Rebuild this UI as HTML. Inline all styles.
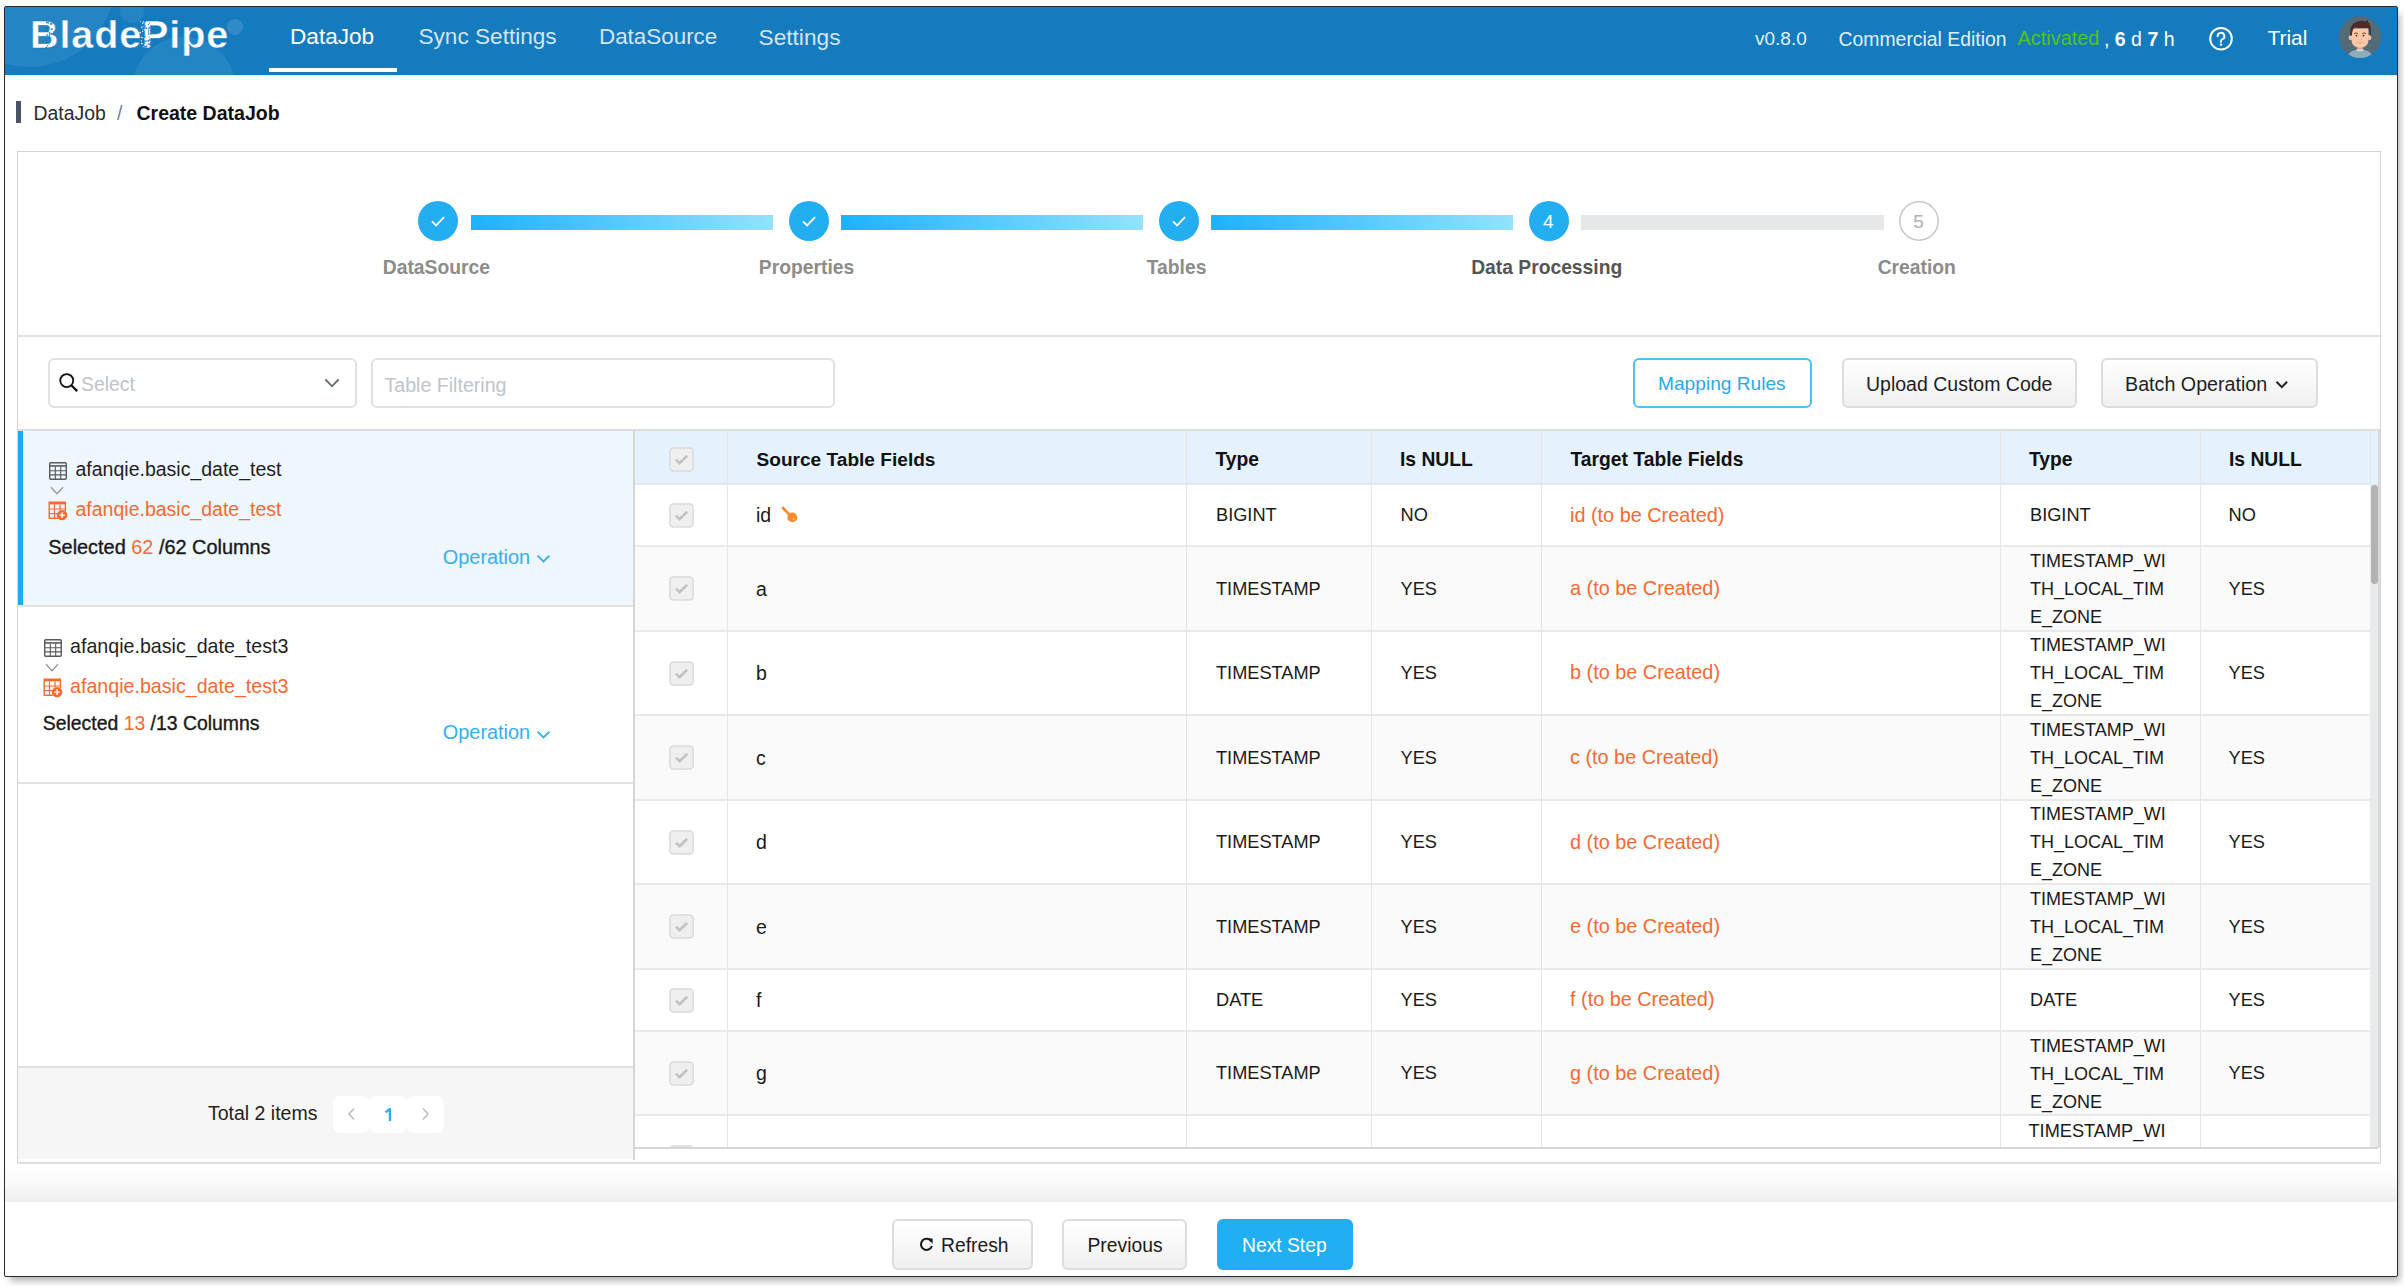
<!DOCTYPE html>
<html><head><meta charset="utf-8"><title>BladePipe</title>
<style>
html,body{margin:0;padding:0;background:#fff;}
body{width:2404px;height:1286px;position:relative;overflow:hidden;font-family:"Liberation Sans", sans-serif;}
.t{position:absolute;white-space:nowrap;}
.r{position:absolute;}
.win{position:absolute;left:4px;top:6px;width:2392px;height:1269px;border:1px solid #2a2a2a;border-radius:2px;background:#fff;box-shadow:4px 6px 7px -2px rgba(0,0,0,0.3);}
</style></head><body>
<div class="win"></div><div class="r" style="left:5px;top:7px;width:2392px;height:68px;background:#157bbf;box-shadow:0 1px 2px rgba(0,40,80,0.12)"></div><div class="r" style="left:5px;top:7px;width:300px;height:68px;overflow:hidden"><div class="r" style="left:-60px;top:-110px;width:170px;height:170px;border-radius:50%;background:rgba(255,255,255,0.07)"></div><div class="r" style="left:115px;top:-8px;width:24px;height:24px;border-radius:50%;background:rgba(255,255,255,0.07)"></div><div class="r" style="left:127px;top:30px;width:104px;height:104px;border-radius:50%;background:rgba(255,255,255,0.07)"></div><div class="r" style="left:222px;top:12px;width:16px;height:16px;border-radius:50%;background:rgba(255,255,255,0.12)"></div></div><div class="t" style="left:30.0px;top:10.11px;font-size:39.5px;line-height:49px;color:#fff;font-weight:700;letter-spacing:0.9px;-webkit-text-stroke:0.45px #157bbf">BladePipe</div><svg class="r" style="left:5px;top:7px" width="240" height="60" viewBox="0 0 240 60"><circle cx="44.4" cy="29.1" r="0.87" fill="#157bbf"/><circle cx="44.5" cy="27.7" r="0.71" fill="#157bbf"/><circle cx="42.4" cy="27.8" r="0.73" fill="#157bbf"/><circle cx="46.9" cy="16.5" r="0.59" fill="#157bbf"/><circle cx="41.7" cy="35.9" r="0.76" fill="#157bbf"/><circle cx="41.3" cy="40.5" r="0.88" fill="#157bbf"/><circle cx="45.9" cy="30.6" r="0.52" fill="#157bbf"/><circle cx="41.1" cy="28.3" r="0.48" fill="#157bbf"/><circle cx="42.4" cy="20.5" r="0.46" fill="#157bbf"/><circle cx="44.5" cy="25.9" r="0.83" fill="#157bbf"/><circle cx="44.9" cy="31.3" r="0.67" fill="#157bbf"/><circle cx="46.0" cy="26.3" r="0.58" fill="#157bbf"/><circle cx="48.5" cy="40.9" r="0.83" fill="#157bbf"/><circle cx="46.3" cy="22.5" r="0.55" fill="#157bbf"/><circle cx="43.2" cy="15.9" r="0.79" fill="#157bbf"/><circle cx="44.0" cy="36.9" r="0.62" fill="#157bbf"/><circle cx="48.2" cy="36.9" r="0.45" fill="#157bbf"/><circle cx="42.6" cy="38.6" r="0.66" fill="#157bbf"/><circle cx="48.4" cy="24.7" r="0.48" fill="#157bbf"/><circle cx="45.7" cy="35.0" r="0.57" fill="#157bbf"/><circle cx="41.7" cy="23.0" r="0.88" fill="#157bbf"/><circle cx="46.7" cy="17.2" r="0.56" fill="#157bbf"/><circle cx="41.8" cy="15.6" r="0.81" fill="#157bbf"/><circle cx="42.3" cy="29.1" r="0.65" fill="#157bbf"/><circle cx="42.4" cy="33.8" r="0.51" fill="#157bbf"/><circle cx="45.8" cy="17.1" r="0.64" fill="#157bbf"/><circle cx="42.6" cy="21.3" r="0.89" fill="#157bbf"/><circle cx="47.0" cy="22.2" r="0.85" fill="#157bbf"/><circle cx="42.6" cy="24.6" r="0.83" fill="#157bbf"/><circle cx="45.8" cy="16.7" r="0.90" fill="#157bbf"/><circle cx="141.3" cy="21.0" r="0.80" fill="#157bbf"/><circle cx="142.0" cy="22.0" r="0.48" fill="#157bbf"/><circle cx="140.5" cy="29.7" r="0.56" fill="#157bbf"/><circle cx="143.6" cy="24.0" r="0.65" fill="#157bbf"/><circle cx="145.8" cy="27.1" r="0.71" fill="#157bbf"/><circle cx="145.2" cy="18.9" r="0.52" fill="#157bbf"/><circle cx="145.5" cy="36.1" r="0.56" fill="#157bbf"/><circle cx="141.1" cy="34.0" r="0.87" fill="#157bbf"/><circle cx="141.2" cy="39.7" r="0.85" fill="#157bbf"/><circle cx="143.6" cy="25.4" r="0.50" fill="#157bbf"/><circle cx="140.2" cy="40.0" r="0.56" fill="#157bbf"/><circle cx="144.2" cy="20.9" r="0.82" fill="#157bbf"/><circle cx="143.6" cy="21.9" r="0.53" fill="#157bbf"/><circle cx="144.3" cy="15.9" r="0.55" fill="#157bbf"/><circle cx="143.4" cy="37.0" r="0.73" fill="#157bbf"/><circle cx="141.7" cy="38.8" r="0.54" fill="#157bbf"/><circle cx="140.1" cy="21.3" r="0.65" fill="#157bbf"/><circle cx="140.4" cy="18.8" r="0.62" fill="#157bbf"/><circle cx="143.4" cy="17.6" r="0.61" fill="#157bbf"/><circle cx="145.3" cy="40.5" r="0.75" fill="#157bbf"/><circle cx="144.1" cy="29.8" r="0.51" fill="#157bbf"/><circle cx="140.2" cy="14.5" r="0.86" fill="#157bbf"/><circle cx="144.2" cy="40.0" r="0.46" fill="#157bbf"/><circle cx="143.8" cy="27.0" r="0.78" fill="#157bbf"/><circle cx="141.9" cy="41.0" r="0.48" fill="#157bbf"/><circle cx="143.3" cy="33.9" r="0.86" fill="#157bbf"/><circle cx="144.4" cy="33.0" r="0.81" fill="#157bbf"/><circle cx="145.5" cy="23.5" r="0.76" fill="#157bbf"/><circle cx="145.4" cy="37.5" r="0.64" fill="#157bbf"/><circle cx="144.7" cy="37.3" r="0.71" fill="#157bbf"/><circle cx="137.7" cy="24.3" r="0.66" fill="#ffffff"/><circle cx="137.7" cy="16.2" r="0.69" fill="#ffffff"/><circle cx="140.0" cy="37.8" r="0.73" fill="#ffffff"/><circle cx="136.3" cy="33.8" r="0.66" fill="#ffffff"/><circle cx="136.6" cy="36.6" r="0.44" fill="#ffffff"/><circle cx="138.5" cy="14.8" r="0.67" fill="#ffffff"/><circle cx="136.9" cy="20.2" r="0.71" fill="#ffffff"/><circle cx="137.0" cy="30.6" r="0.81" fill="#ffffff"/><circle cx="135.5" cy="14.3" r="0.54" fill="#ffffff"/><circle cx="138.1" cy="19.5" r="0.48" fill="#ffffff"/><circle cx="139.4" cy="31.8" r="0.60" fill="#ffffff"/><circle cx="139.4" cy="22.8" r="0.70" fill="#ffffff"/><circle cx="135.2" cy="25.6" r="0.76" fill="#ffffff"/><circle cx="139.5" cy="37.8" r="0.57" fill="#ffffff"/><circle cx="137.5" cy="22.5" r="0.46" fill="#ffffff"/><circle cx="137.0" cy="36.6" r="0.78" fill="#ffffff"/><circle cx="138.3" cy="39.7" r="0.52" fill="#ffffff"/><circle cx="135.0" cy="26.2" r="0.52" fill="#ffffff"/></svg><div class="t" style="left:290.0px;top:23.37px;font-size:22.6px;line-height:28px;color:#fff;font-weight:400;">DataJob</div><div class="t" style="left:418.5px;top:23.37px;font-size:22.6px;line-height:28px;color:rgba(255,255,255,0.82);font-weight:400;">Sync Settings</div><div class="t" style="left:599.0px;top:23.44px;font-size:22.4px;line-height:28px;color:rgba(255,255,255,0.82);font-weight:400;">DataSource</div><div class="t" style="left:758.5px;top:23.33px;font-size:22.7px;line-height:28px;color:rgba(255,255,255,0.82);font-weight:400;">Settings</div><div class="r" style="left:269px;top:68px;width:128px;height:4px;background:#fff"></div><div class="t" style="left:1755.0px;top:27.22px;font-size:19px;line-height:24px;color:rgba(255,255,255,0.9);font-weight:400;">v0.8.0</div><div class="t" style="left:1838.5px;top:27.08px;font-size:19.4px;line-height:24px;color:rgba(255,255,255,0.9);font-weight:400;">Commercial Edition</div><div class="t" style="left:2017.6px;top:26.40px;font-size:19.9px;line-height:25px;color:#52c41a;font-weight:400;">Activated</div><div class="t" style="left:2104.0px;top:27.04px;font-size:19.5px;line-height:24px;color:#fff;font-weight:400;">, <b>6</b> d <b>7</b> h</div><svg class="r" style="left:2208px;top:26px" width="26" height="26" viewBox="0 0 26 26"><circle cx="13" cy="12.7" r="10.8" fill="none" stroke="#fff" stroke-width="2"/><path d="M9.6 10.2a3.4 3.4 0 1 1 4.6 3.2c-.8.35-1.2.9-1.2 1.7v.9" fill="none" stroke="#fff" stroke-width="1.9" stroke-linecap="round"/><circle cx="13" cy="18.6" r="1.2" fill="#fff"/></svg><div class="t" style="left:2267.4px;top:25.12px;font-size:21px;line-height:26px;color:#fff;font-weight:400;">Trial</div><svg class="r" style="left:2339px;top:16px" width="42" height="42" viewBox="0 0 42 42"><defs><clipPath id="av"><circle cx="21" cy="21" r="21"/></clipPath></defs><circle cx="21" cy="21" r="21" fill="#536a77"/><g clip-path="url(#av)"><path d="M7.5 43c1-6.5 6.5-9.6 13.5-9.6s12.5 3.1 13.5 9.6z" fill="#8aacbc"/><rect x="18.3" y="29" width="5.4" height="5.6" fill="#e8a98c"/><path d="M17.6 33.6q3.4 2.2 6.8 0" fill="none" stroke="#d4e0e8" stroke-width="1.3"/><ellipse cx="11.6" cy="21.6" rx="2" ry="2.6" fill="#f6c2a3"/><ellipse cx="30.4" cy="21.6" rx="2" ry="2.6" fill="#f6c2a3"/><path d="M12.6 12.5h16.8v11.5c0 5.2-3.6 7.6-8.4 7.6s-8.4-2.4-8.4-7.6z" fill="#fbc7a6"/><path d="M11.2 19.8c-.6-7.5 1.6-12.6 6.2-13.8 2.6-1.3 6-1.6 9-.6l2.7-1.6-.2 2.4c2.2 1.6 3.6 5 2.9 13.4l-1-.3c-.2-3.2-.6-6-1.6-7.6-3.8.4-9.8.5-13.8-.1-1.6 1.6-2.3 4.6-2.5 8z" fill="#4b2a27"/><path d="M15 17.6q1.9-1.3 3.8 0M23.2 17.6q1.9-1.3 3.8 0" fill="none" stroke="#5a3a33" stroke-width="0.9"/><circle cx="17.5" cy="19.6" r="0.95" fill="#3b3434"/><circle cx="24.5" cy="19.6" r="0.95" fill="#3b3434"/><path d="M20 23.5q1 .8 2 0" fill="none" stroke="#e9ae92" stroke-width="0.8"/><path d="M18.6 26.3q2.4 1.6 4.8 0" fill="none" stroke="#e09c82" stroke-width="0.9"/></g></svg><div class="r" style="left:16px;top:101px;width:5px;height:22px;background:#4a5466"></div><div class="t" style="left:33.5px;top:100.78px;font-size:19.4px;line-height:24px;color:#2c2c2c;font-weight:400;">DataJob</div><div class="t" style="left:117.0px;top:100.78px;font-size:19.4px;line-height:24px;color:#6e7f94;font-weight:400;">/</div><div class="t" style="left:136.5px;top:101.14px;font-size:19.5px;line-height:24px;color:#111;font-weight:700;">Create DataJob</div><div class="r" style="left:17px;top:151px;width:2364px;height:1013px;border:1px solid #d4d4d4;background:#fff;box-sizing:border-box"></div><div class="r" style="left:18px;top:335px;width:2362px;height:2px;background:#e2e2e2"></div><div class="r" style="left:471px;top:215px;width:302px;height:15px;background:linear-gradient(90deg,#1ab3fe,#94e2fd)"></div><svg class="r" style="left:418.4px;top:200.5px" width="40" height="40" viewBox="0 0 40 40"><circle cx="20" cy="20" r="20" fill="#23aef2"/><path d="M14 20.4l4.1 4 7.9-8.2" fill="none" stroke="#fff" stroke-width="1.8"/></svg><div class="t" style="left:286.4px;width:300px;text-align:center;top:255.71px;font-size:19.3px;line-height:24px;color:#8c8c8c;font-weight:700">DataSource</div><div class="r" style="left:841px;top:215px;width:302px;height:15px;background:linear-gradient(90deg,#1ab3fe,#94e2fd)"></div><svg class="r" style="left:788.5px;top:200.5px" width="40" height="40" viewBox="0 0 40 40"><circle cx="20" cy="20" r="20" fill="#23aef2"/><path d="M14 20.4l4.1 4 7.9-8.2" fill="none" stroke="#fff" stroke-width="1.8"/></svg><div class="t" style="left:656.5px;width:300px;text-align:center;top:255.71px;font-size:19.3px;line-height:24px;color:#8c8c8c;font-weight:700">Properties</div><div class="r" style="left:1211px;top:215px;width:302px;height:15px;background:linear-gradient(90deg,#1ab3fe,#94e2fd)"></div><svg class="r" style="left:1158.6px;top:200.5px" width="40" height="40" viewBox="0 0 40 40"><circle cx="20" cy="20" r="20" fill="#23aef2"/><path d="M14 20.4l4.1 4 7.9-8.2" fill="none" stroke="#fff" stroke-width="1.8"/></svg><div class="t" style="left:1026.6px;width:300px;text-align:center;top:255.71px;font-size:19.3px;line-height:24px;color:#8c8c8c;font-weight:700">Tables</div><div class="r" style="left:1581px;top:215px;width:303px;height:15px;background:#e6e7e9"></div><svg class="r" style="left:1528.7px;top:200.5px" width="40" height="40" viewBox="0 0 40 40"><circle cx="20" cy="20" r="20" fill="#23aef2"/></svg><div class="t" style="left:1543.1px;top:209.92px;font-size:19px;line-height:24px;color:#fff;font-weight:400;">4</div><div class="t" style="left:1396.7px;width:300px;text-align:center;top:255.71px;font-size:19.3px;line-height:24px;color:#555;font-weight:700">Data Processing</div><svg class="r" style="left:1898.8px;top:200.5px" width="40" height="40" viewBox="0 0 40 40"><circle cx="20" cy="20" r="19.2" fill="#fff" stroke="#c8c8c8" stroke-width="1.5"/></svg><div class="t" style="left:1913.2px;top:209.92px;font-size:19px;line-height:24px;color:#b0b0b0;font-weight:400;">5</div><div class="t" style="left:1766.8px;width:300px;text-align:center;top:255.71px;font-size:19.3px;line-height:24px;color:#8c8c8c;font-weight:700">Creation</div><div class="r" style="left:48px;top:358px;width:309px;height:50px;border:2px solid #dfe1e5;border-radius:6px;box-sizing:border-box;background:#fff"></div><svg class="r" style="left:57px;top:371px" width="24" height="24" viewBox="0 0 24 24"><circle cx="9.75" cy="9.6" r="6.5" fill="none" stroke="#111" stroke-width="1.8"/><path d="M14.6 14.5l5.6 5.6" stroke="#111" stroke-width="2.3" stroke-linecap="butt"/></svg><div class="t" style="left:81.0px;top:372.48px;font-size:19.4px;line-height:24px;color:#c0c4cc;font-weight:400;">Select</div><svg class="r" style="left:322px;top:375px" width="20" height="16" viewBox="0 0 20 16"><path d="M3.4 4.3l6.6 7 6.6-7" fill="none" stroke="#5e6773" stroke-width="1.8"/></svg><div class="r" style="left:371px;top:358px;width:464px;height:50px;border:2px solid #dfe1e5;border-radius:6px;box-sizing:border-box;background:#fff"></div><div class="t" style="left:384.5px;top:372.51px;font-size:19.6px;line-height:24px;color:#c0c4cc;font-weight:400;">Table Filtering</div><div class="r" style="left:1633px;top:358px;width:179px;height:50px;border:2px solid #4dc0f5;border-radius:6px;box-sizing:border-box;background:#fff"></div><div class="t" style="left:1658.0px;top:372.36px;font-size:19.15px;line-height:24px;color:#2aa9ec;font-weight:400;">Mapping Rules</div><div class="r" style="left:1842px;top:358px;width:235px;height:50px;border:2px solid #dcdde0;border-radius:6px;box-sizing:border-box;background:linear-gradient(#ffffff,#f0f0f0)"></div><div class="t" style="left:1866.0px;top:372.24px;font-size:19.5px;line-height:24px;color:#1f1f1f;font-weight:400;">Upload Custom Code</div><div class="r" style="left:2101px;top:358px;width:217px;height:50px;border:2px solid #dcdde0;border-radius:6px;box-sizing:border-box;background:linear-gradient(#ffffff,#f0f0f0)"></div><div class="t" style="left:2125.0px;top:371.67px;font-size:19.7px;line-height:25px;color:#1f1f1f;font-weight:400;">Batch Operation</div><svg class="r" style="left:2272px;top:376px" width="20" height="16" viewBox="0 0 20 16"><path d="M4.5 5.8l5.3 5.3 5.3-5.3" fill="none" stroke="#222" stroke-width="2"/></svg><div class="r" style="left:18px;top:429px;width:2362px;height:2px;background:#dedede"></div><div class="r" style="left:18px;top:431px;width:615px;height:175px;background:#eef6fe"></div><div class="r" style="left:18px;top:431px;width:5px;height:175px;background:#1fabf1"></div><div class="r" style="left:18px;top:605px;width:615px;height:2px;background:#e3e3e3"></div><div class="r" style="left:18px;top:782px;width:615px;height:2px;background:#e3e3e3"></div><div class="r" style="left:633px;top:431px;width:2px;height:729px;background:#d6d6d6"></div><svg class="r" style="left:49px;top:462px" width="18" height="18" viewBox="0 0 18 18"><rect x="0.7" y="0.7" width="16.6" height="16.6" rx="1.2" fill="none" stroke="#5a5a5a" stroke-width="1.4"/><path d="M0.7 3.9h16.6" stroke="#5a5a5a" stroke-width="1.6"/><path d="M6.3 4.5v12.8M11.7 4.5v12.8M1 8.7h16M1 12.9h16" stroke="#5a5a5a" stroke-width="1.1"/></svg><svg class="r" style="left:50.3px;top:486px" width="14" height="9" viewBox="0 0 14 9"><path d="M1 1.2l6 6.6 6-6.6" fill="none" stroke="#9a9a9a" stroke-width="1.4"/></svg><svg class="r" style="left:48px;top:500.5px" width="20" height="20" viewBox="0 0 20 20"><path d="M10 17.2H1.2V1.2h16.2v8.8" fill="none" stroke="#f76a2f" stroke-width="1.4"/><rect x="1.2" y="1.2" width="16.2" height="2.2" fill="#f76a2f"/><path d="M6.5 3.4v13.8M12 3.4v6M1.2 8h16.2M1.2 12.6h9" stroke="#f76a2f" stroke-width="1.2"/><circle cx="14.1" cy="14.1" r="5.2" fill="#f76a2f"/><path d="M14.1 11.3v5.6M11.3 14.1h5.6" stroke="#fff" stroke-width="1.4"/></svg><svg class="r" style="left:43.5px;top:639px" width="18" height="18" viewBox="0 0 18 18"><rect x="0.7" y="0.7" width="16.6" height="16.6" rx="1.2" fill="none" stroke="#5a5a5a" stroke-width="1.4"/><path d="M0.7 3.9h16.6" stroke="#5a5a5a" stroke-width="1.6"/><path d="M6.3 4.5v12.8M11.7 4.5v12.8M1 8.7h16M1 12.9h16" stroke="#5a5a5a" stroke-width="1.1"/></svg><svg class="r" style="left:44.8px;top:663px" width="14" height="9" viewBox="0 0 14 9"><path d="M1 1.2l6 6.6 6-6.6" fill="none" stroke="#9a9a9a" stroke-width="1.4"/></svg><svg class="r" style="left:42.5px;top:677.5px" width="20" height="20" viewBox="0 0 20 20"><path d="M10 17.2H1.2V1.2h16.2v8.8" fill="none" stroke="#f76a2f" stroke-width="1.4"/><rect x="1.2" y="1.2" width="16.2" height="2.2" fill="#f76a2f"/><path d="M6.5 3.4v13.8M12 3.4v6M1.2 8h16.2M1.2 12.6h9" stroke="#f76a2f" stroke-width="1.2"/><circle cx="14.1" cy="14.1" r="5.2" fill="#f76a2f"/><path d="M14.1 11.3v5.6M11.3 14.1h5.6" stroke="#fff" stroke-width="1.4"/></svg><div class="t" style="left:75.5px;top:457.04px;font-size:19.5px;line-height:24px;color:#1f1f1f;font-weight:400;">afanqie.basic_date_test</div><div class="t" style="left:75.5px;top:496.74px;font-size:19.5px;line-height:24px;color:#f76a2f;font-weight:400;">afanqie.basic_date_test</div><div class="t" style="left:48.3px;top:535.10px;font-size:19.9px;line-height:25px;color:#1a1a1a;font-weight:400;-webkit-text-stroke:0.35px #1a1a1a">Selected <span style="color:#f76a2f;-webkit-text-stroke:0">62</span> /62 Columns</div><div class="t" style="left:442.8px;top:544.50px;font-size:19.9px;line-height:25px;color:#34b0f2;font-weight:400;">Operation</div><svg class="r" style="left:536px;top:554px" width="15" height="10" viewBox="0 0 15 10"><path d="M1.6 1.6l5.9 5.9 5.9-5.9" fill="none" stroke="#34b0f2" stroke-width="1.9"/></svg><div class="t" style="left:70.0px;top:634.09px;font-size:19.65px;line-height:25px;color:#1f1f1f;font-weight:400;">afanqie.basic_date_test3</div><div class="t" style="left:70.0px;top:673.99px;font-size:19.65px;line-height:25px;color:#f76a2f;font-weight:400;">afanqie.basic_date_test3</div><div class="t" style="left:42.8px;top:711.48px;font-size:19.4px;line-height:24px;color:#1a1a1a;font-weight:400;-webkit-text-stroke:0.35px #1a1a1a">Selected <span style="color:#f76a2f;-webkit-text-stroke:0">13</span> /13 Columns</div><div class="t" style="left:442.8px;top:720.30px;font-size:19.9px;line-height:25px;color:#34b0f2;font-weight:400;">Operation</div><svg class="r" style="left:536px;top:729.8px" width="15" height="10" viewBox="0 0 15 10"><path d="M1.6 1.6l5.9 5.9 5.9-5.9" fill="none" stroke="#34b0f2" stroke-width="1.9"/></svg><div class="r" style="left:18px;top:1066px;width:615px;height:2px;background:#e0e0e0"></div><div class="r" style="left:18px;top:1068px;width:615px;height:91px;background:#f6f6f6"></div><div class="t" style="left:208.0px;top:1100.54px;font-size:19.5px;line-height:24px;color:#1f1f1f;font-weight:400;">Total 2 items</div><div class="r" style="left:333px;top:1096px;width:37px;height:37px;background:#fff;border-radius:7px"></div><div class="r" style="left:369px;top:1096px;width:38px;height:37px;background:#fff;border-radius:7px"></div><div class="r" style="left:406px;top:1096px;width:38px;height:37px;background:#fff;border-radius:7px"></div><svg class="r" style="left:343px;top:1105px" width="18" height="18" viewBox="0 0 18 18"><path d="M11 3.5l-5 5.5 5 5.5" fill="none" stroke="#bdbdbd" stroke-width="1.5"/></svg><svg class="r" style="left:380px;top:1104px" width="16" height="20" viewBox="0 0 16 20"><path d="M5.6 8.4L9.9 4.9V17.2" fill="none" stroke="#2aaef2" stroke-width="2.3" stroke-linejoin="round"/></svg><svg class="r" style="left:416px;top:1105px" width="18" height="18" viewBox="0 0 18 18"><path d="M7 3.5l5 5.5-5 5.5" fill="none" stroke="#bdbdbd" stroke-width="1.5"/></svg><div class="r" style="left:635px;top:431px;width:1743px;height:53px;background:#e5f1fd"></div><div class="r" style="left:2370px;top:484px;width:8px;height:664px;background:#e9eaeb"></div><div class="r" style="left:2378px;top:431px;width:2px;height:717px;background:#d8d9db"></div><div class="r" style="left:2370px;top:431px;width:1px;height:53px;background:#dfe6ee"></div><div class="r" style="left:2371px;top:485px;width:7px;height:99px;background:#b3b3b3;border-radius:4px"></div><div class="r" style="left:635px;top:484px;width:1735px;height:664px;overflow:hidden"><div class="r" style="left:0px;top:62.3px;width:1735px;height:84.5px;background:#fafafa"></div><div class="r" style="left:0px;top:230.9px;width:1735px;height:84.9px;background:#fafafa"></div><div class="r" style="left:0px;top:400.2px;width:1735px;height:84.6px;background:#fafafa"></div><div class="r" style="left:0px;top:546.8px;width:1735px;height:84.5px;background:#fafafa"></div><div class="r" style="left:0px;top:61.3px;width:1735px;height:2.0px;background:#e9e9e9"></div><div class="r" style="left:0px;top:145.8px;width:1735px;height:2.0px;background:#e9e9e9"></div><div class="r" style="left:0px;top:229.9px;width:1735px;height:2.0px;background:#e9e9e9"></div><div class="r" style="left:0px;top:314.8px;width:1735px;height:2.0px;background:#e9e9e9"></div><div class="r" style="left:0px;top:399.2px;width:1735px;height:2.0px;background:#e9e9e9"></div><div class="r" style="left:0px;top:483.8px;width:1735px;height:2.0px;background:#e9e9e9"></div><div class="r" style="left:0px;top:545.8px;width:1735px;height:2.0px;background:#e9e9e9"></div><div class="r" style="left:0px;top:630.3px;width:1735px;height:2.0px;background:#e9e9e9"></div></div><div class="r" style="left:635px;top:483px;width:1735px;height:2px;background:#e3e8ee"></div><div class="r" style="left:727px;top:431px;width:1px;height:717px;background:#e6e6e6"></div><div class="r" style="left:1186px;top:431px;width:1px;height:717px;background:#e6e6e6"></div><div class="r" style="left:1371px;top:431px;width:1px;height:717px;background:#e6e6e6"></div><div class="r" style="left:1541px;top:431px;width:1px;height:717px;background:#e6e6e6"></div><div class="r" style="left:2000px;top:431px;width:1px;height:717px;background:#e6e6e6"></div><div class="r" style="left:2200px;top:431px;width:1px;height:717px;background:#e6e6e6"></div><div class="r" style="left:633px;top:1147px;width:1745px;height:2px;background:#d6d6d6"></div><svg class="r" style="left:668.5px;top:446.5px" width="25" height="25" viewBox="0 0 25 25"><rect x="0.9" y="0.9" width="23.2" height="23.2" rx="3.5" fill="#efefef" stroke="#dadada" stroke-width="1.5"/><path d="M7 12.6l3.6 3.6 7.6-7.4" fill="none" stroke="#c2c2c2" stroke-width="2.6"/></svg><div class="t" style="left:756.5px;top:448.48px;font-size:19.1px;line-height:24px;color:#111;font-weight:700;">Source Table Fields</div><div class="t" style="left:1215.5px;top:448.41px;font-size:19.3px;line-height:24px;color:#111;font-weight:700;">Type</div><div class="t" style="left:1400.0px;top:448.41px;font-size:19.3px;line-height:24px;color:#111;font-weight:700;">Is NULL</div><div class="t" style="left:1570.5px;top:448.41px;font-size:19.3px;line-height:24px;color:#111;font-weight:700;">Target Table Fields</div><div class="t" style="left:2029.0px;top:448.41px;font-size:19.3px;line-height:24px;color:#111;font-weight:700;">Type</div><div class="t" style="left:2229.0px;top:448.41px;font-size:19.3px;line-height:24px;color:#111;font-weight:700;">Is NULL</div><svg class="r" style="left:668.5px;top:502.9px" width="25" height="25" viewBox="0 0 25 25"><rect x="0.9" y="0.9" width="23.2" height="23.2" rx="3.5" fill="#efefef" stroke="#dadada" stroke-width="1.5"/><path d="M7 12.6l3.6 3.6 7.6-7.4" fill="none" stroke="#c2c2c2" stroke-width="2.6"/></svg><div class="t" style="left:756.0px;top:503.44px;font-size:19.5px;line-height:24px;color:#1a1a1a;font-weight:400;">id</div><div class="t" style="left:1216.0px;top:504.39px;font-size:18.2px;line-height:23px;color:#1a1a1a;font-weight:400;">BIGINT</div><div class="t" style="left:1400.5px;top:504.39px;font-size:18.2px;line-height:23px;color:#1a1a1a;font-weight:400;">NO</div><div class="t" style="left:1570.0px;top:502.82px;font-size:19.85px;line-height:25px;color:#f76a2f;font-weight:400;">id (to be Created)</div><div class="t" style="left:2030.0px;top:504.39px;font-size:18.2px;line-height:23px;color:#1a1a1a;font-weight:400;">BIGINT</div><div class="t" style="left:2228.5px;top:504.39px;font-size:18.2px;line-height:23px;color:#1a1a1a;font-weight:400;">NO</div><svg class="r" style="left:668.5px;top:576.2px" width="25" height="25" viewBox="0 0 25 25"><rect x="0.9" y="0.9" width="23.2" height="23.2" rx="3.5" fill="#efefef" stroke="#dadada" stroke-width="1.5"/><path d="M7 12.6l3.6 3.6 7.6-7.4" fill="none" stroke="#c2c2c2" stroke-width="2.6"/></svg><div class="t" style="left:756.0px;top:576.79px;font-size:19.5px;line-height:24px;color:#1a1a1a;font-weight:400;">a</div><div class="t" style="left:1216.0px;top:577.74px;font-size:18.2px;line-height:23px;color:#1a1a1a;font-weight:400;">TIMESTAMP</div><div class="t" style="left:1400.5px;top:577.74px;font-size:18.2px;line-height:23px;color:#1a1a1a;font-weight:400;">YES</div><div class="t" style="left:1570.0px;top:576.17px;font-size:19.85px;line-height:25px;color:#f76a2f;font-weight:400;">a (to be Created)</div><div class="t" style="left:2030.0px;top:550.01px;font-size:18.0px;line-height:22px;color:#1a1a1a;font-weight:400;">TIMESTAMP_WI</div><div class="t" style="left:2030.0px;top:578.01px;font-size:18.0px;line-height:22px;color:#1a1a1a;font-weight:400;">TH_LOCAL_TIM</div><div class="t" style="left:2030.0px;top:606.01px;font-size:18.0px;line-height:22px;color:#1a1a1a;font-weight:400;">E_ZONE</div><div class="t" style="left:2228.5px;top:577.74px;font-size:18.2px;line-height:23px;color:#1a1a1a;font-weight:400;">YES</div><svg class="r" style="left:668.5px;top:660.5px" width="25" height="25" viewBox="0 0 25 25"><rect x="0.9" y="0.9" width="23.2" height="23.2" rx="3.5" fill="#efefef" stroke="#dadada" stroke-width="1.5"/><path d="M7 12.6l3.6 3.6 7.6-7.4" fill="none" stroke="#c2c2c2" stroke-width="2.6"/></svg><div class="t" style="left:756.0px;top:661.09px;font-size:19.5px;line-height:24px;color:#1a1a1a;font-weight:400;">b</div><div class="t" style="left:1216.0px;top:662.04px;font-size:18.2px;line-height:23px;color:#1a1a1a;font-weight:400;">TIMESTAMP</div><div class="t" style="left:1400.5px;top:662.04px;font-size:18.2px;line-height:23px;color:#1a1a1a;font-weight:400;">YES</div><div class="t" style="left:1570.0px;top:660.47px;font-size:19.85px;line-height:25px;color:#f76a2f;font-weight:400;">b (to be Created)</div><div class="t" style="left:2030.0px;top:634.31px;font-size:18.0px;line-height:22px;color:#1a1a1a;font-weight:400;">TIMESTAMP_WI</div><div class="t" style="left:2030.0px;top:662.31px;font-size:18.0px;line-height:22px;color:#1a1a1a;font-weight:400;">TH_LOCAL_TIM</div><div class="t" style="left:2030.0px;top:690.31px;font-size:18.0px;line-height:22px;color:#1a1a1a;font-weight:400;">E_ZONE</div><div class="t" style="left:2228.5px;top:662.04px;font-size:18.2px;line-height:23px;color:#1a1a1a;font-weight:400;">YES</div><svg class="r" style="left:668.5px;top:745.0px" width="25" height="25" viewBox="0 0 25 25"><rect x="0.9" y="0.9" width="23.2" height="23.2" rx="3.5" fill="#efefef" stroke="#dadada" stroke-width="1.5"/><path d="M7 12.6l3.6 3.6 7.6-7.4" fill="none" stroke="#c2c2c2" stroke-width="2.6"/></svg><div class="t" style="left:756.0px;top:745.59px;font-size:19.5px;line-height:24px;color:#1a1a1a;font-weight:400;">c</div><div class="t" style="left:1216.0px;top:746.54px;font-size:18.2px;line-height:23px;color:#1a1a1a;font-weight:400;">TIMESTAMP</div><div class="t" style="left:1400.5px;top:746.54px;font-size:18.2px;line-height:23px;color:#1a1a1a;font-weight:400;">YES</div><div class="t" style="left:1570.0px;top:744.97px;font-size:19.85px;line-height:25px;color:#f76a2f;font-weight:400;">c (to be Created)</div><div class="t" style="left:2030.0px;top:718.81px;font-size:18.0px;line-height:22px;color:#1a1a1a;font-weight:400;">TIMESTAMP_WI</div><div class="t" style="left:2030.0px;top:746.81px;font-size:18.0px;line-height:22px;color:#1a1a1a;font-weight:400;">TH_LOCAL_TIM</div><div class="t" style="left:2030.0px;top:774.81px;font-size:18.0px;line-height:22px;color:#1a1a1a;font-weight:400;">E_ZONE</div><div class="t" style="left:2228.5px;top:746.54px;font-size:18.2px;line-height:23px;color:#1a1a1a;font-weight:400;">YES</div><svg class="r" style="left:668.5px;top:829.7px" width="25" height="25" viewBox="0 0 25 25"><rect x="0.9" y="0.9" width="23.2" height="23.2" rx="3.5" fill="#efefef" stroke="#dadada" stroke-width="1.5"/><path d="M7 12.6l3.6 3.6 7.6-7.4" fill="none" stroke="#c2c2c2" stroke-width="2.6"/></svg><div class="t" style="left:756.0px;top:830.24px;font-size:19.5px;line-height:24px;color:#1a1a1a;font-weight:400;">d</div><div class="t" style="left:1216.0px;top:831.19px;font-size:18.2px;line-height:23px;color:#1a1a1a;font-weight:400;">TIMESTAMP</div><div class="t" style="left:1400.5px;top:831.19px;font-size:18.2px;line-height:23px;color:#1a1a1a;font-weight:400;">YES</div><div class="t" style="left:1570.0px;top:829.62px;font-size:19.85px;line-height:25px;color:#f76a2f;font-weight:400;">d (to be Created)</div><div class="t" style="left:2030.0px;top:803.46px;font-size:18.0px;line-height:22px;color:#1a1a1a;font-weight:400;">TIMESTAMP_WI</div><div class="t" style="left:2030.0px;top:831.46px;font-size:18.0px;line-height:22px;color:#1a1a1a;font-weight:400;">TH_LOCAL_TIM</div><div class="t" style="left:2030.0px;top:859.46px;font-size:18.0px;line-height:22px;color:#1a1a1a;font-weight:400;">E_ZONE</div><div class="t" style="left:2228.5px;top:831.19px;font-size:18.2px;line-height:23px;color:#1a1a1a;font-weight:400;">YES</div><svg class="r" style="left:668.5px;top:914.2px" width="25" height="25" viewBox="0 0 25 25"><rect x="0.9" y="0.9" width="23.2" height="23.2" rx="3.5" fill="#efefef" stroke="#dadada" stroke-width="1.5"/><path d="M7 12.6l3.6 3.6 7.6-7.4" fill="none" stroke="#c2c2c2" stroke-width="2.6"/></svg><div class="t" style="left:756.0px;top:914.74px;font-size:19.5px;line-height:24px;color:#1a1a1a;font-weight:400;">e</div><div class="t" style="left:1216.0px;top:915.69px;font-size:18.2px;line-height:23px;color:#1a1a1a;font-weight:400;">TIMESTAMP</div><div class="t" style="left:1400.5px;top:915.69px;font-size:18.2px;line-height:23px;color:#1a1a1a;font-weight:400;">YES</div><div class="t" style="left:1570.0px;top:914.12px;font-size:19.85px;line-height:25px;color:#f76a2f;font-weight:400;">e (to be Created)</div><div class="t" style="left:2030.0px;top:887.96px;font-size:18.0px;line-height:22px;color:#1a1a1a;font-weight:400;">TIMESTAMP_WI</div><div class="t" style="left:2030.0px;top:915.96px;font-size:18.0px;line-height:22px;color:#1a1a1a;font-weight:400;">TH_LOCAL_TIM</div><div class="t" style="left:2030.0px;top:943.96px;font-size:18.0px;line-height:22px;color:#1a1a1a;font-weight:400;">E_ZONE</div><div class="t" style="left:2228.5px;top:915.69px;font-size:18.2px;line-height:23px;color:#1a1a1a;font-weight:400;">YES</div><svg class="r" style="left:668.5px;top:987.5px" width="25" height="25" viewBox="0 0 25 25"><rect x="0.9" y="0.9" width="23.2" height="23.2" rx="3.5" fill="#efefef" stroke="#dadada" stroke-width="1.5"/><path d="M7 12.6l3.6 3.6 7.6-7.4" fill="none" stroke="#c2c2c2" stroke-width="2.6"/></svg><div class="t" style="left:756.0px;top:988.04px;font-size:19.5px;line-height:24px;color:#1a1a1a;font-weight:400;">f</div><div class="t" style="left:1216.0px;top:988.99px;font-size:18.2px;line-height:23px;color:#1a1a1a;font-weight:400;">DATE</div><div class="t" style="left:1400.5px;top:988.99px;font-size:18.2px;line-height:23px;color:#1a1a1a;font-weight:400;">YES</div><div class="t" style="left:1570.0px;top:987.42px;font-size:19.85px;line-height:25px;color:#f76a2f;font-weight:400;">f (to be Created)</div><div class="t" style="left:2030.0px;top:988.99px;font-size:18.2px;line-height:23px;color:#1a1a1a;font-weight:400;">DATE</div><div class="t" style="left:2228.5px;top:988.99px;font-size:18.2px;line-height:23px;color:#1a1a1a;font-weight:400;">YES</div><svg class="r" style="left:668.5px;top:1060.8px" width="25" height="25" viewBox="0 0 25 25"><rect x="0.9" y="0.9" width="23.2" height="23.2" rx="3.5" fill="#efefef" stroke="#dadada" stroke-width="1.5"/><path d="M7 12.6l3.6 3.6 7.6-7.4" fill="none" stroke="#c2c2c2" stroke-width="2.6"/></svg><div class="t" style="left:756.0px;top:1061.29px;font-size:19.5px;line-height:24px;color:#1a1a1a;font-weight:400;">g</div><div class="t" style="left:1216.0px;top:1062.24px;font-size:18.2px;line-height:23px;color:#1a1a1a;font-weight:400;">TIMESTAMP</div><div class="t" style="left:1400.5px;top:1062.24px;font-size:18.2px;line-height:23px;color:#1a1a1a;font-weight:400;">YES</div><div class="t" style="left:1570.0px;top:1060.67px;font-size:19.85px;line-height:25px;color:#f76a2f;font-weight:400;">g (to be Created)</div><div class="t" style="left:2030.0px;top:1034.51px;font-size:18.0px;line-height:22px;color:#1a1a1a;font-weight:400;">TIMESTAMP_WI</div><div class="t" style="left:2030.0px;top:1062.51px;font-size:18.0px;line-height:22px;color:#1a1a1a;font-weight:400;">TH_LOCAL_TIM</div><div class="t" style="left:2030.0px;top:1090.51px;font-size:18.0px;line-height:22px;color:#1a1a1a;font-weight:400;">E_ZONE</div><div class="t" style="left:2228.5px;top:1062.24px;font-size:18.2px;line-height:23px;color:#1a1a1a;font-weight:400;">YES</div><svg class="r" style="left:778px;top:503px" width="22" height="22" viewBox="0 0 22 22"><path d="M5 5l9.2 9.4" stroke="#f98c2c" stroke-width="2.7" stroke-linecap="round"/><circle cx="14.3" cy="14.4" r="4.9" fill="#f98c2c"/><circle cx="15.6" cy="15.9" r="0.9" fill="#fcc8a0"/></svg><div class="r" style="left:635px;top:1116px;width:1735px;height:31px;overflow:hidden"><div class="r" style="left:33.5px;top:29px"><svg width="25" height="25" viewBox="0 0 25 25"><rect x="0.9" y="0.9" width="23.2" height="23.2" rx="3.5" fill="#efefef" stroke="#dadada" stroke-width="1.5"/></svg></div><div class="t" style="left:1393.5px;top:3.89px;font-size:18.2px;line-height:23px;color:#1a1a1a">TIMESTAMP_WI</div></div><div class="r" style="left:5px;top:1164px;width:2392px;height:38px;background:linear-gradient(#ffffff 0%,#fbfbfb 40%,#efefef 100%)"></div><div class="r" style="left:17px;top:1162px;width:2364px;height:2px;background:#e0e0e0"></div><div class="r" style="left:892px;top:1219px;width:141px;height:51px;border:2px solid #dcdde0;border-radius:6px;box-sizing:border-box;background:linear-gradient(#ffffff,#f0f0f0)"></div><svg class="r" style="left:918px;top:1236px" width="17" height="17" viewBox="0 0 17 17"><path d="M13.2 5.2A5.6 5.6 0 1 0 13.9 10" fill="none" stroke="#1a1a1a" stroke-width="2.1"/><path d="M9.4 2.6h5.2v5.2z" fill="#1a1a1a"/></svg><div class="t" style="left:941.0px;top:1234.01px;font-size:19.3px;line-height:24px;color:#1a1a1a;font-weight:400;">Refresh</div><div class="r" style="left:1062px;top:1219px;width:125px;height:51px;border:2px solid #dcdde0;border-radius:6px;box-sizing:border-box;background:linear-gradient(#ffffff,#f0f0f0)"></div><div class="t" style="left:1087.5px;top:1234.01px;font-size:19.3px;line-height:24px;color:#1a1a1a;font-weight:400;">Previous</div><div class="r" style="left:1217px;top:1219px;width:136px;height:51px;background:#22aef2;border-radius:6px"></div><div class="t" style="left:1242.0px;top:1234.01px;font-size:19.3px;line-height:24px;color:#fff;font-weight:400;">Next Step</div>
</body></html>
